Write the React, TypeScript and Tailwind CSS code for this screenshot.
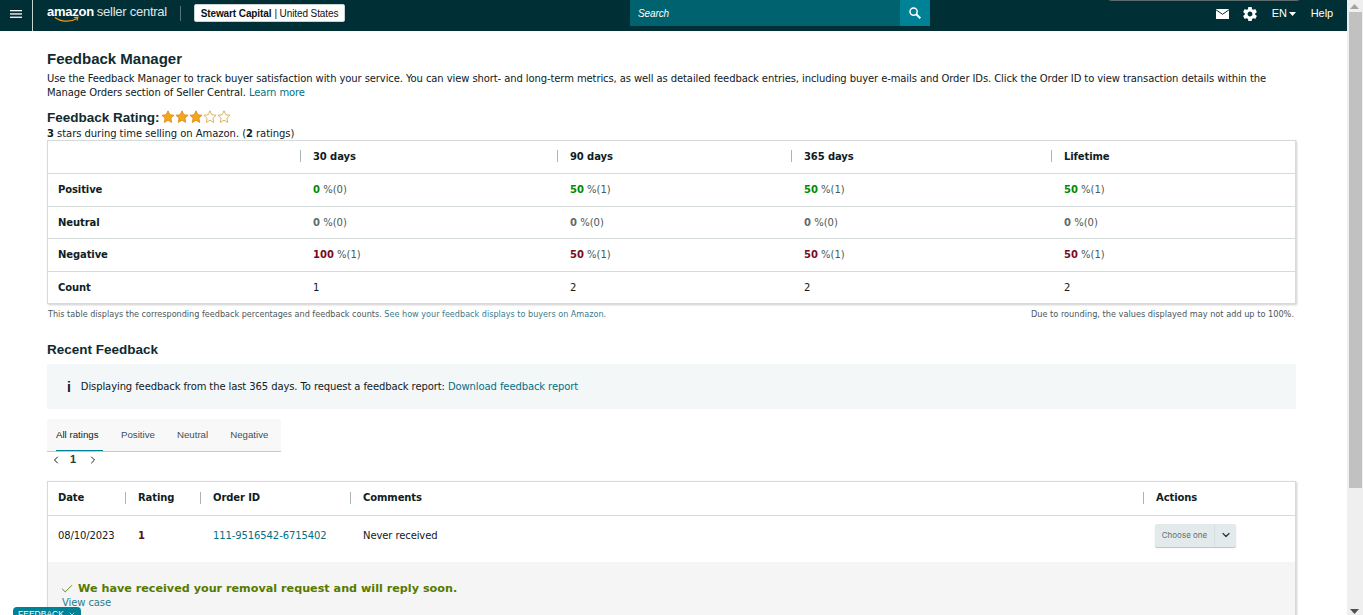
import { ChevronDown, ChevronLeft, ChevronRight, Check } from "lucide-react";

const ratingCols = "grid grid-cols-[252px_257px_234px_260px_1fr]";
const feedbackCols = "grid grid-cols-[77px_75px_150px_793px_1fr]";

const ratingRows = [
    { label: "Positive", color: "text-[#008a00]", cells: [["0", "(0)"], ["50", "(1)"], ["50", "(1)"], ["50", "(1)"]] },
    { label: "Neutral", color: "text-[#5f6b6d]", cells: [["0", "(0)"], ["0", "(0)"], ["0", "(0)"], ["0", "(0)"]] },
    { label: "Negative", color: "text-[#7d0a1c]", cells: [["100", "(1)"], ["50", "(1)"], ["50", "(1)"], ["50", "(1)"]] },
];

function Star({ filled }: { filled: boolean }) {
    return (
        <svg width="14" height="13" viewBox="0 0 24 23">
            <path
                d="M12 1.5l3.2 6.9 7.5.9-5.5 5.2 1.4 7.4L12 18.2l-6.6 3.7 1.4-7.4L1.300 9.300l7.500-.9z"
                fill={filled ? "#f3a51c" : "#fff"}
                stroke={filled ? "#e08a10" : "#d9a441"}
                strokeWidth="1.5"
            />
        </svg>
    );
}

function Header() {
    return (
        <div className="relative flex h-[31px] shrink-0 whitespace-nowrap bg-[#012f36] text-white">
            <div className="flex w-[33px] items-center justify-center border-r border-[#c9d3d4] pb-[4px]">
                <svg width="12" height="8" viewBox="0 0 12 8" fill="#fff">
                    <rect width="12" height="1.300" />
                    <rect y="3.300" width="12" height="1.300" />
                    <rect y="6.600" width="12" height="1.300" />
                </svg>
            </div>
            <div className="relative ml-[14px] w-[120px]">
                <div className="flex items-baseline pt-[3px] font-['Liberation_Sans',sans-serif] text-[13px] leading-[18px] tracking-[-0.26px]">
                    <span className="font-bold">amazon</span>
                    <span className="ml-[3px] font-normal text-[#dfe6e7]">seller central</span>
                </div>
                <svg className="absolute left-[7px] top-[16px]" width="26" height="8" viewBox="0 0 26 8">
                    <path d="M1 1.500C7 6 16 6.500 23 2.500" fill="none" stroke="#f29a1f" strokeWidth="1.300" />
                    <path d="M20 1.500l4-.3-1 3.500" fill="none" stroke="#f29a1f" strokeWidth="1.100" />
                </svg>
            </div>
            <div className="ml-[13px] mt-[6px] h-[15px] w-px bg-[#5a7479]" />
            <div className="ml-[13px] mt-[4px] flex h-[18px] w-[151px] items-center justify-center rounded-[2px] border border-[#c9d3d4] bg-white font-['Liberation_Sans',sans-serif] text-[10px] text-[#0f1111]">
                <span className="font-bold">Stewart Capital</span>
                <span className="ml-[3px]">| United States</span>
            </div>
            <div className="ml-[285px] flex h-[26px] w-[300px]">
                <div className="flex flex-1 items-center bg-[#00626f] pl-[8px] font-['Liberation_Sans',sans-serif] text-[10px] italic">Search</div>
                <div className="flex w-[30px] items-center justify-center bg-[#008296]">
                    <svg width="12" height="12" viewBox="0 0 12 12" fill="none" stroke="#fff">
                        <circle cx="4.600" cy="4.600" r="3.600" strokeWidth="1.500" />
                        <path d="M7.300 7.300L11.300 11.300" strokeWidth="2" />
                    </svg>
                </div>
            </div>
            <div className="ml-auto flex items-center pb-[4px] pr-[14px] font-['Liberation_Sans',sans-serif] text-[11px]">
                <svg width="13" height="10" viewBox="0 0 13 10">
                    <path d="M0 0h13v10H0z" fill="#fff" />
                    <path d="M0 .8l6.500 4.500L13 .8" fill="none" stroke="#012f36" strokeWidth="1" />
                </svg>
                <svg className="ml-[14px]" width="14" height="14" viewBox="2 2 20 20" fill="#fff">
                    <path d="M19.430 12.980c.04-.32.07-.64.07-.98s-.03-.66-.07-.98l2.110-1.650c.19-.15.24-.42.12-.64l-2-3.460c-.12-.22-.39-.3-.61-.22l-2.490 1c-.52-.4-1.080-.73-1.690-.98l-.38-2.650C14.460 2.180 14.250 2 14 2h-4c-.25 0-.46.18-.49.42l-.38 2.650c-.61.25-1.170.59-1.690.98l-2.490-1c-.23-.09-.49 0-.61.22l-2 3.460c-.13.22-.07.49.12.64l2.110 1.650c-.04.32-.07.65-.07.98s.03.66.07.98l-2.110 1.650c-.19.15-.24.42-.12.64l2 3.460c.12.22.39.3.61.22l2.490-1c.52.4 1.080.73 1.690.98l.38 2.650c.03.24.24.42.49.42h4c.25 0 .46-.18.49-.42l.38-2.650c.61-.25 1.170-.59 1.690-.98l2.490 1c.23.09.49 0 .61-.22l2-3.460c.12-.22.07-.49-.12-.64l-2.110-1.650zM12 15.500c-1.930 0-3.500-1.570-3.500-3.500s1.570-3.500 3.500-3.500 3.500 1.570 3.500 3.500-1.570 3.500-3.500 3.500z" />
                </svg>
                <span className="ml-[15px]">EN</span>
                <svg className="ml-[2px]" width="7" height="4" viewBox="0 0 7 4"><path d="M0 0h7L3.500 4z" fill="#fff" /></svg>
                <span className="ml-[15px]">Help</span>
            </div>
            <div className="absolute left-[1108px] top-[-4px] h-[5px] w-[192px] rounded-[5px] border border-[#5d6b6e] bg-[#111]" />
        </div>
    );
}

function RatingTable() {
    return (
        <div className="mt-[1px] border border-[#d5dbdb] shadow-[1px_1px_2px_rgba(0,0,0,0.2)]">
            <div className={`${ratingCols} h-[32px] items-center pb-[2px] font-bold`}>
                <div />
                {["30 days", "90 days", "365 days", "Lifetime"].map((h) => (
                    <div key={h} className="flex h-[12px] items-center border-l border-[#a9b4b6] pl-[12px]">{h}</div>
                ))}
            </div>
            {ratingRows.map((row) => (
                <div key={row.label} className={`${ratingCols} h-[32.500px] items-center border-t border-[#d5dbdb]`}>
                    <div className="pl-[10px] font-bold">{row.label}</div>
                    {row.cells.map((c, id) => (
                        <div key={id} className="pl-[13px] tracking-normal">
                            <span className={`font-bold ${row.color}`}>{c[0]}</span>
                            <span className="text-[#4a5759]"> %{c[1]}</span>
                        </div>
                    ))}
                </div>
            ))}
            <div className={`${ratingCols} h-[32.500px] items-center border-t border-[#d5dbdb]`}>
                <div className="pl-[10px] font-bold">Count</div>
                {["1", "2", "2", "2"].map((c, id) => (
                    <div key={id} className="pl-[13px]">{c}</div>
                ))}
            </div>
        </div>
    );
}

function RecentFeedback() {
    return (
        <div className="mt-[14px] shrink-0 border border-[#d5dbdb] shadow-[1px_1px_2px_rgba(0,0,0,0.2)]">
            <div className={`${feedbackCols} h-[33px] items-center pb-[2px] font-bold`}>
                <div className="pl-[10px]">Date</div>
                {["Rating", "Order ID", "Comments", "Actions"].map((h) => (
                    <div key={h} className="flex h-[12px] items-center border-l border-[#a9b4b6] pl-[12px]">{h}</div>
                ))}
            </div>
            <div className={`${feedbackCols} h-[47px] items-center border-t border-[#d5dbdb] pb-[8px]`}>
                <div className="pl-[10px]">08/10/2023</div>
                <div className="pl-[13px] font-bold text-[#5a1020]">1</div>
                <div className="pl-[13px] text-[#007185]">111-9516542-6715402</div>
                <div className="pl-[13px]">Never received</div>
                <div className="pl-[12px]">
                    <div className="flex h-[23px] w-[81px] rounded-[2px] bg-[#e3eaeb] shadow-[0_1px_1px_rgba(0,0,0,0.25)]">
                        <div className="flex w-[60px] items-center justify-center border-r border-[#d5dfe0] font-['Inter',sans-serif] text-[8px] tracking-normal text-[#5f6f72]">Choose one</div>
                        <div className="flex flex-1 items-center justify-center">
                            <ChevronDown size={12} strokeWidth={2.500} className="text-[#233a3f]" />
                        </div>
                    </div>
                </div>
            </div>
            <div className="h-[80px] bg-[#f5f5f5] pl-[12px] pt-[20px]">
                <div className="flex items-center text-[11.200px] font-bold leading-[14px] tracking-normal text-[#557a00]">
                    <Check size={14} strokeWidth={1.500} className="mr-[4px] text-[#557a00]" />
                    We have received your removal request and will reply soon.
                </div>
                <div className="pl-[2px] leading-[13px] text-[#2a7f90]">View case</div>
            </div>
        </div>
    );
}

export default function App() {
    return (
        <div className="relative flex h-[615px] overflow-hidden bg-white font-['DejaVu_Sans','Liberation_Sans',sans-serif] text-[10px] tracking-[-0.1px] text-[#0f2024]">
            <div className="flex min-w-0 flex-1 flex-col">
                <Header />
                <div className="flex flex-col pl-[47px] pr-[51px]">
                    <h1 className="mt-[19px] font-['Liberation_Sans',sans-serif] text-[15px] font-bold leading-[18px] tracking-normal text-[#0f2a30]">Feedback Manager</h1>
                    <p className="mt-[4px] text-[10px] leading-[14px]">
                        Use the Feedback Manager to track buyer satisfaction with your service. You can view short- and long-term metrics, as well as detailed feedback entries, including buyer e-mails and Order IDs. Click the Order ID to view transaction details within the Manage Orders section of Seller Central. <span className="text-[#007185]">Learn more</span>
                    </p>
                    <div className="mt-[10px] flex h-[17px] items-center font-['Liberation_Sans',sans-serif] text-[13.500px] font-bold tracking-normal text-[#0f2a30]">
                        Feedback Rating:
                        <span className="mb-[4px] ml-[1px] flex">
                            {[true, true, true, false, false].map((f, id) => <Star key={id} filled={f} />)}
                        </span>
                    </div>
                    <div className="h-[12px] leading-[14px] tracking-[-0.05px]"><b>3</b> stars during time selling on Amazon. (<b>2</b> ratings)</div>
                    <RatingTable />
                    <div className="mt-[4px] flex justify-between pl-[1px] text-[8.200px] leading-[12px] tracking-normal text-[#4a5759]">
                        <div className="text-[8.100px]">This table displays the corresponding feedback percentages and feedback counts. <span className="text-[#3a7c8c]">See how your feedback displays to buyers on Amazon.</span></div>
                        <div className="pr-[2px]">Due to rounding, the values displayed may not add up to 100%.</div>
                    </div>
                    <h2 className="mt-[21px] font-['Liberation_Sans',sans-serif] text-[13.500px] font-bold leading-[18px] tracking-normal text-[#0f2a30]">Recent Feedback</h2>
                    <div className="mt-[5px] flex h-[45px] items-center bg-[#f3f7f8] pl-[20px]">
                        <span className="font-['Liberation_Sans',sans-serif] text-[14px] font-bold leading-none">i</span>
                        <span className="ml-[10px]">Displaying feedback from the last 365 days. To request a feedback report: <span className="text-[#007185]">Download feedback report</span></span>
                    </div>
                    <div className="mt-[10px] flex h-[33px] w-[234px] border-b border-[#c4c9ca] bg-[#f8f8f8] font-['Liberation_Sans',sans-serif] text-[9.700px] tracking-normal text-[#3f5054]">
                        <div className="ml-[9px] flex h-[32px] w-[47px] items-center border-y border-y-transparent border-b-[#008296] text-[#0f2024]">All ratings</div>
                        <div className="ml-[18px] flex h-[32px] items-center">Positive</div>
                        <div className="ml-[22px] flex h-[32px] items-center">Neutral</div>
                        <div className="ml-[22px] flex h-[32px] items-center">Negative</div>
                    </div>
                    <div className="flex h-[15px] items-center pl-[3px] font-['Liberation_Sans',sans-serif] text-[11px]">
                        <ChevronLeft size={12} strokeWidth={2} />
                        <span className="ml-[8px] font-bold text-[#233a3f]">1</span>
                        <ChevronRight size={12} strokeWidth={2} className="ml-[11px]" />
                    </div>
                    <RecentFeedback />
                </div>
            </div>
            <div className="relative h-full w-[16px] shrink-0 bg-[#efefef]">
                <svg className="absolute left-[3px] top-[4px]" width="9" height="5" viewBox="0 0 9 5"><path d="M4.500 0L9 5H0z" fill="#a3a3a3" /></svg>
                <div className="ml-[2px] mt-[12px] h-[476px] w-[13px] bg-[#c1c1c1]" />
                <svg className="absolute bottom-[1px] left-[3px]" width="9" height="5" viewBox="0 0 9 5"><path d="M0 0h9L4.500 5z" fill="#505050" /></svg>
            </div>
            <div className="absolute bottom-[-6px] left-[13px] flex h-[14px] w-[68px] items-start justify-center gap-[4px] rounded-t-[4px] bg-[#008296] pt-[2px] font-['Liberation_Sans',sans-serif] text-[8.500px] leading-[10px] tracking-normal text-white">
                FEEDBACK
                <ChevronDown size={8} strokeWidth={2} className="mt-[1px]" />
            </div>
        </div>
    );
}
